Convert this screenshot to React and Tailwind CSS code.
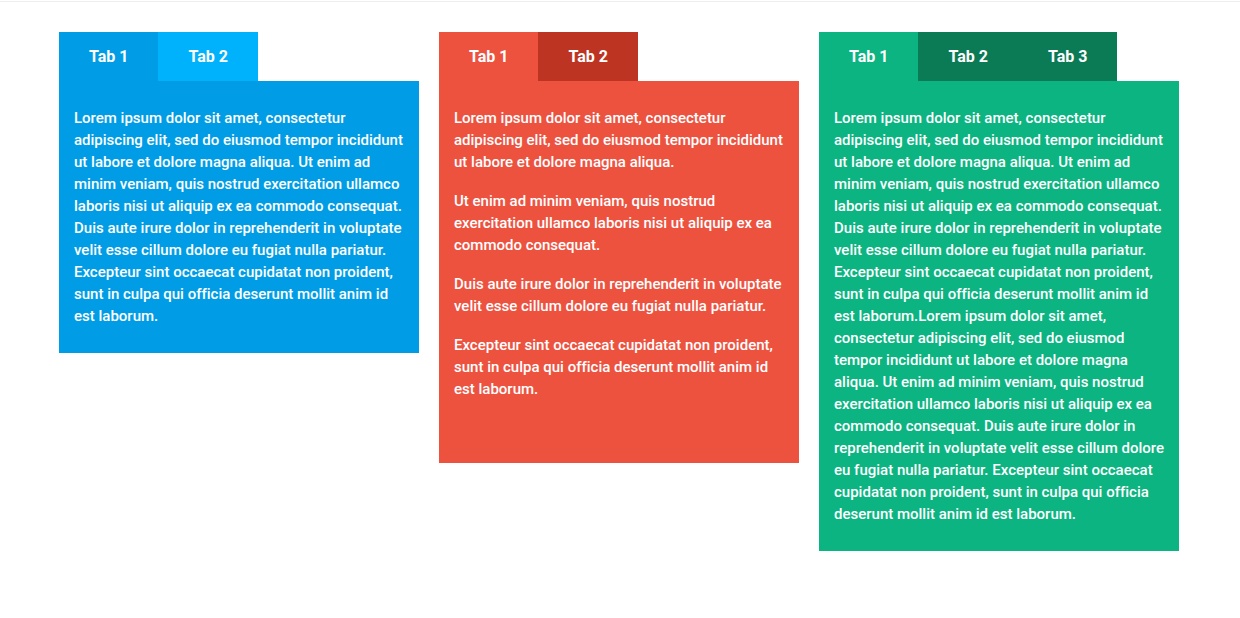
import { useId, useState } from "react";

const lorem =
  "Lorem ipsum dolor sit amet, consectetur adipiscing elit, sed do eiusmod tempor incididunt ut labore et dolore magna aliqua. Ut enim ad minim veniam, quis nostrud exercitation ullamco laboris nisi ut aliquip ex ea commodo consequat. Duis aute irure dolor in reprehenderit in voluptate velit esse cillum dolore eu fugiat nulla pariatur. Excepteur sint occaecat cupidatat non proident, sunt in culpa qui officia deserunt mollit anim id est laborum.";

const paragraphs = [
  "Lorem ipsum dolor sit amet, consectetur adipiscing elit, sed do eiusmod tempor incididunt ut labore et dolore magna aliqua.",
  "Ut enim ad minim veniam, quis nostrud exercitation ullamco laboris nisi ut aliquip ex ea commodo consequat.",
  "Duis aute irure dolor in reprehenderit in voluptate velit esse cillum dolore eu fugiat nulla pariatur.",
  "Excepteur sint occaecat cupidatat non proident, sunt in culpa qui officia deserunt mollit anim id est laborum.",
];

const groups = [
  {
    name: "Blue tabs",
    active: "bg-[#009de6]",
    idle: "bg-[#00b2fc]",
    panel: "pb-[26px]",
    tabs: [[lorem], paragraphs],
  },
  {
    name: "Red tabs",
    active: "bg-[#ed523f]",
    idle: "bg-[#bd3522]",
    panel: "pb-[63px]",
    tabs: [paragraphs, [lorem]],
  },
  {
    name: "Green tabs",
    active: "bg-[#0bb480]",
    idle: "bg-[#0b7b56]",
    panel: "pb-[26px]",
    tabs: [[lorem + lorem], [lorem], paragraphs],
  },
];

function TabGroup({ name, active, idle, panel, tabs }) {
  const [selected, setSelected] = useState(0);
  const id = useId();
  return (
    <section>
      <div role="tablist" aria-label={name} className="flex">
        {tabs.map((_, i) => (
          <button
            key={i}
            id={`${id}-tab-${i}`}
            type="button"
            role="tab"
            aria-selected={i === selected}
            aria-controls={`${id}-panel`}
            onClick={() => setSelected(i)}
            className={`px-[30px] pt-[14px] pb-[13px] text-base leading-[22px] font-bold ${i === selected ? active : idle}`}
          >
            Tab {i + 1}
          </button>
        ))}
      </div>
      <div
        id={`${id}-panel`}
        role="tabpanel"
        aria-labelledby={`${id}-tab-${selected}`}
        className={`flex flex-col gap-[17px] px-[15px] pt-[26px] text-[15px] leading-[22px] font-medium [font-variant-ligatures:none] ${panel} ${active}`}
      >
        {tabs[selected].map((text) => (
          <p key={text}>{text}</p>
        ))}
      </div>
    </section>
  );
}

export default function App() {
  return (
    <div className="pt-px font-['Roboto',sans-serif] text-white">
      <main className="grid grid-cols-3 items-start gap-5 border-t border-[#eeeeee] pt-[30px] pr-[61px] pl-[59px]">
        {groups.map((group) => (
          <TabGroup key={group.name} {...group} />
        ))}
      </main>
    </div>
  );
}
